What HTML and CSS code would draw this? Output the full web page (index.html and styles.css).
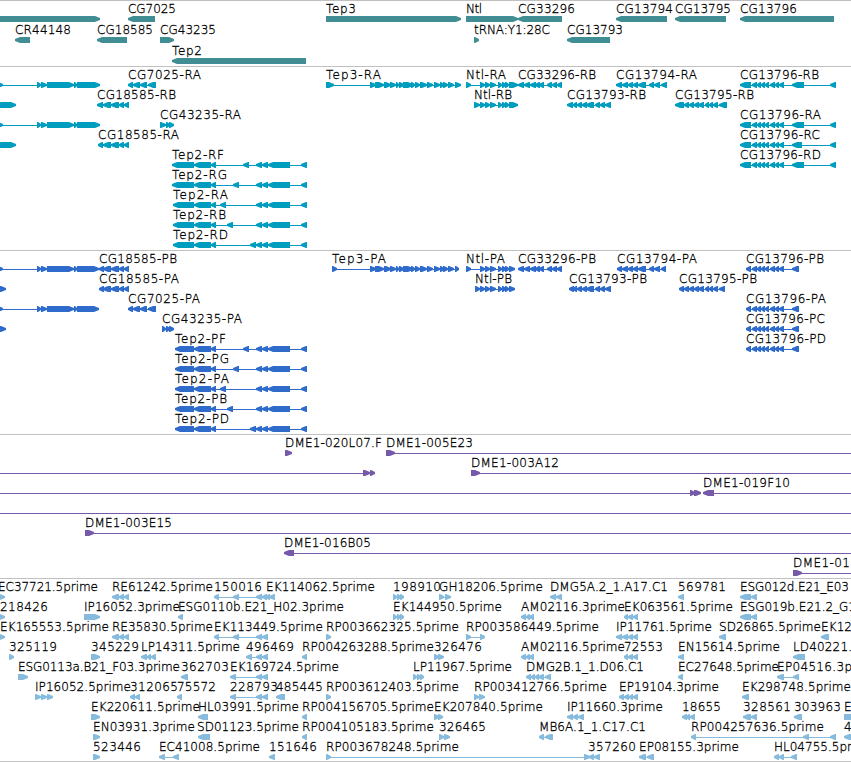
FILE: index.html
```html
<!DOCTYPE html>
<html lang="en">
<head>
  <meta charset="UTF-8">
  <title>Genome region</title>
  <link rel="stylesheet" href="styles.css">
</head>
<body>

  <main class="browser">
    <section class="track genes"><svg id="genes" class="canvas"></svg></section>
    <section class="track transcripts"><svg id="transcripts" class="canvas"></svg></section>
    <section class="track proteins"><svg id="proteins" class="canvas"></svg></section>
    <section class="track bacs"><svg id="bacs" class="canvas"></svg></section>
    <section class="track ests"><svg id="ests" class="canvas"></svg></section>
  </main>

  <script src="tracks.js"></script>
</body>
</html>
```

FILE: styles.css
```css
* {
  box-sizing: border-box;
}

body {
  margin: 0;
  background: #fff;
  overflow: hidden;
}

.browser {
  display: flex;
  flex-direction: column;
  width: 851px;
}

.track {
  border-top: 1px solid #c0c0c0;
  overflow: hidden;
}

.canvas {
  display: block;
  width: 100%;
  height: 100%;
}

.genes {
  height: 66px;
  color: #408e93;
}

.transcripts {
  height: 184px;
  color: #009dbe;
}

.proteins {
  height: 184px;
  color: #2e6bcb;
}

.bacs {
  height: 144px;
  color: #7659a8;
}

.ests {
  height: 184px;
  border-bottom: 1px solid #c0c0c0;
  color: #87bbdd;
}

.label {
  font-family: "DejaVu Sans", sans-serif;
  font-size: 12px;
  font-weight: 200;
  fill: #000;
  stroke: #000;
  stroke-width: 0.3px;
}

.exon,
.intron {
  fill: currentColor;
}
```

FILE: tracks.js
```javascript
const SVG = 'http://www.w3.org/2000/svg';

// exon structures shared by several isoforms
const left = '-5-3 37-41 41-47 47-74 74-77 77-';
const cg18585 = '103-111 111-119 119-124 124-129';
const cg7025 = '128-133 133-140 140-147 148-156';
const tep3 = '370-376 375-384 384-391 390-396 396-399 399-404 403-413 411-415 415-420 420-427 427-433 434-440 440-444 443-448 448-454 ';
const ntl = '480-485 485-490 490-496 498-502 502-506 505-509 ';
const cg33296 = '518-524 524-530 530-536 535-540 539-544 547-552 552-557 557-562';
const cg13793 = '573-577 577-582 582-587 586-594 595-600 600-605 605-611';
const cg13794 = '622-628 628-633 633-638 638-646 649-654 654-660 ';
const cg13795 = '684-689 689-694 694-699 698-704 705-709 709-713 713-718 ';
const cg13796 = '752-757 757-761 761-765 765-769 770-775 775-779 779-784 ';
const tep2Mid = '-194 194-211 211-216 ';
const tep2End = ' 256-262 262-268 268-290 301-307';
const estA = '214-219 233-239 256-262 ';
const estB = '624-628 628-633 633-638';

// [row, label, label start, label end, strand, exons]
const tracks = {
  genes: [
    [0, '', 0, 0, '>', '-5-100'],
    [0, 'CG7025', 128, 176, '<', '128-155'],
    [0, 'Tep3', 326, 356, '>', '326-461'],
    [0, 'Ntl', 466, 482, '>', '466-518'],
    [0, 'CG33296', 518, 575, '<', '518-562'],
    [0, 'CG13794', 616, 673, '<', '616-667'],
    [0, 'CG13795', 675, 731, '<', '675-726'],
    [0, 'CG13796', 740, 797, '<', '740-834'],
    [1, 'CR44148', 15, 71, '<', '15-30'],
    [1, 'CG18585', 97, 153, '<', '97-127'],
    [1, 'CG43235', 160, 216, '>', '160-174'],
    [1, 'tRNA:Y1:28C', 474, 550, '>', '474-479'],
    [1, 'CG13793', 567, 623, '<', '567-610'],
    [2, 'Tep2', 172, 202, '<', '172-306']
  ],
  transcripts: [
    [0, '', 0, 0, '>', left + '100'],
    [0, 'CG7025-RA', 128, 201, '<', cg7025],
    [0, 'Tep3-RA', 326, 381, '>', '326-334 ' + tep3 + '455-461'],
    [0, 'Ntl-RA', 466, 506, '>', '466-471 ' + ntl + '509-518'],
    [0, 'CG33296-RB', 518, 596, '<', cg33296],
    [0, 'CG13794-RA', 616, 697, '<', '616-622 ' + cg13794 + '661-667'],
    [0, 'CG13796-RB', 740, 819, '<', '740-751 ' + cg13796 + '792-804 830-836'],
    [1, '', 0, 0, '>', '-5-16'],
    [1, 'CG18585-RB', 97, 176, '<', '97-103 ' + cg18585],
    [1, 'Ntl-RB', 474, 512, '>', '474-480 ' + ntl + '509-518'],
    [1, 'CG13793-RB', 567, 646, '<', '567-573 ' + cg13793],
    [1, 'CG13795-RB', 675, 754, '<', '675-684 ' + cg13795 + '719-727'],
    [2, '', 0, 0, '>', left + '100'],
    [2, 'CG43235-RA', 160, 241, '>', '160-166 166-170 169-174'],
    [2, 'CG13796-RA', 740, 821, '<', '740-751 ' + cg13796 + '792-804 830-836'],
    [3, '', 0, 0, '>', '-5-16'],
    [3, 'CG18585-RA', 98, 179, '<', '98-103 ' + cg18585],
    [3, 'CG13796-RC', 740, 820, '<', '740-751 ' + cg13796 + '792-802 830-836'],
    [4, 'Tep2-RF', 172, 224, '<', '172' + tep2Mid + '243-249' + tep2End],
    [4, 'CG13796-RD', 740, 821, '<', '740-751 ' + cg13796 + '792-804 830-836'],
    [5, 'Tep2-RG', 172, 227, '<', '172' + tep2Mid + '233-239' + tep2End],
    [6, 'Tep2-RA', 173, 228, '<', '173' + tep2Mid + '220-226' + tep2End],
    [7, 'Tep2-RB', 173, 226, '<', '173' + tep2Mid + '227-233' + tep2End],
    [8, 'Tep2-RD', 173, 228, '<', '173' + tep2Mid + '250-256' + tep2End]
  ],
  proteins: [
    [0, '', 0, 0, '>', left + '99'],
    [0, 'CG18585-PB', 99, 177, '<', '99-104 ' + cg18585],
    [0, 'Tep3-PA', 332, 386, '>', '332-337 ' + tep3 + '455-459'],
    [0, 'Ntl-PA', 466, 505, '>', '466-471 ' + ntl + '509-515'],
    [0, 'CG33296-PB', 518, 596, '<', cg33296],
    [0, 'CG13794-PA', 617, 697, '<', '617-622 ' + cg13794 + '661-666'],
    [0, 'CG13796-PB', 746, 824, '<', '746-751 ' + cg13796 + '792-799'],
    [1, '', 0, 0, '>', '-5-6'],
    [1, 'CG18585-PA', 99, 179, '<', '99-104 ' + cg18585],
    [1, 'Ntl-PB', 475, 512, '>', '475-480 ' + ntl + '509-515'],
    [1, 'CG13793-PB', 569, 647, '<', '569-574 ' + cg13793],
    [1, 'CG13795-PB', 679, 757, '<', '679-684 ' + cg13795 + '719-725'],
    [2, '', 0, 0, '>', left + '99'],
    [2, 'CG7025-PA', 128, 200, '<', cg7025],
    [2, 'CG13796-PA', 746, 826, '<', '746-751 ' + cg13796 + '792-799'],
    [3, '', 0, 0, '>', '-5-6'],
    [3, 'CG43235-PA', 162, 242, '>', '162-166 166-170 169-174'],
    [3, 'CG13796-PC', 746, 825, '<', '746-751 ' + cg13796 + '792-799'],
    [4, 'Tep2-PF', 175, 226, '<', '175' + tep2Mid + '243-249' + tep2End],
    [4, 'CG13796-PD', 746, 826, '<', '746-751 ' + cg13796 + '792-799'],
    [5, 'Tep2-PG', 175, 229, '<', '175' + tep2Mid + '233-239' + tep2End],
    [6, 'Tep2-PA', 175, 229, '<', '175' + tep2Mid + '220-226' + tep2End],
    [7, 'Tep2-PB', 175, 227, '<', '175' + tep2Mid + '227-233' + tep2End],
    [8, 'Tep2-PD', 175, 229, '<', '175' + tep2Mid + '250-256' + tep2End]
  ],
  bacs: [
    [0, 'DME1-020L07.F', 285, 382, '>', '285-292'],
    [0, 'DME1-005E23', 386, 473, '>', '386-395 870-880'],
    [1, '', 0, 0, '>', '-20--10 363-370 370-375'],
    [1, 'DME1-003A12', 471, 559, '>', '471-480 870-880'],
    [2, '', 0, 0, '>', '-20--10 690-695 694-701'],
    [2, 'DME1-019F10', 703, 790, '<', '703-714 870-880'],
    [3, '', 0, 0, '>', '-20--10 870-880'],
    [4, 'DME1-003E15', 85, 172, '>', '85-94 870-880'],
    [5, 'DME1-016B05', 284, 371, '<', '284-294 870-880'],
    [6, 'DME1-01', 793, 850, '>', '793-802 870-880']
  ],
  ests: [
    [0, 'EC37721.5prime', -2, 98, '>', '-5-5'],
    [0, 'RE61242.5prime', 112, 213, '<', '112-119 119-124 124-129'],
    [0, '150016', 214, 262, '<', estA + '262-267'],
    [0, 'EK114062.5prime', 266, 375, '<', '266-270 269-275'],
    [0, '198910', 393, 441, '>', '393-397 397-401 400-404'],
    [0, 'GH18206.5prime', 439, 543, '>', '439-444 445-451'],
    [0, 'DMG5A.2_1.A17.C1', 550, 668, '<', '550-556 556-562'],
    [0, '569781', 678, 726, '<', '678-684'],
    [0, 'ESG012d.E21_E03', 740, 849, '<', '740-751 751-757'],
    [1, '218426', 0, 48, '>', '-5-5'],
    [1, 'IP16052.3prime', 84, 180, '>', '84-100'],
    [1, 'ESG0110b.E21_H02.3prime', 178, 344, '<', '178-183'],
    [1, 'EK144950.5prime', 393, 502, '>', '393-397 397-401 400-404'],
    [1, 'AM02116.3prime', 521, 625, '<', '521-526 526-530 529-534'],
    [1, 'EK063561.5prime', 624, 733, '<', estB],
    [1, 'ESG019b.E21.2_G1', 740, 856, '<', '740-751 751-757'],
    [2, 'EK165553.5prime', 0, 109, '>', '-5-5'],
    [2, 'RE35830.5prime', 112, 213, '<', '112-119 119-124 124-129'],
    [2, 'EK113449.5prime', 214, 323, '<', estA + '262-268'],
    [2, 'RP003662325.5prime', 326, 459, '>', '326-331'],
    [2, 'RP003586449.5prime', 466, 599, '>', '466-471 480-485'],
    [2, 'IP11761.5prime', 616, 712, '<', '616-622 622-628 628-633 633-638'],
    [2, 'SD26865.5prime', 719, 821, '<', '719-726'],
    [2, 'EK12', 821, 852, '<', '821-829'],
    [3, '325119', 9, 57, '>', '9-14'],
    [3, '345229', 91, 139, '>', '91-100'],
    [3, 'LP14311.5prime', 141, 240, '<', '141-147 147-151 151-156'],
    [3, '496469', 246, 294, '<', '246-252 256-262 262-268'],
    [3, 'RP004263288.5prime', 302, 434, '<', '302-307'],
    [3, '326476', 434, 482, '>', '434-439 438-444'],
    [3, 'AM02116.5prime', 521, 625, '<', '521-526 526-530 529-534'],
    [3, '72553', 624, 663, '<', estB],
    [3, 'EN15614.5prime', 678, 780, '<', '678-684'],
    [3, 'LD40221.', 793, 852, '<', '793-805'],
    [4, 'ESG0113a.B21_F03.3prime', 18, 180, '>', '18-28'],
    [4, '362703', 181, 229, '<', '181-188'],
    [4, 'EK169724.5prime', 230, 339, '<', '230-236 256-262 262-268'],
    [4, 'LP11967.5prime', 413, 512, '>', '413-417 417-421 420-424'],
    [4, 'DMG2B.1_1.D06.C1', 526, 644, '<', '526-531 531-535 535-539 538-544 545-551'],
    [4, 'EC27648.5prime', 678, 779, '<', '678-683'],
    [4, 'EP04516.3p', 777, 852, '<', '777-784 793-799'],
    [5, 'IP16052.5prime', 35, 131, '>', '35-41 41-47 47-53'],
    [5, '312065', 130, 178, '<', '130-135 135-140'],
    [5, '75572', 177, 216, '<', '177-182'],
    [5, '228793', 230, 278, '<', '230-236 256-262 262-268'],
    [5, '485445', 276, 323, '<', '276-285'],
    [5, 'RP003612403.5prime', 326, 459, '>', '326-331'],
    [5, 'RP003412766.5prime', 474, 607, '>', '474-479 479-485'],
    [5, 'EP19104.3prime', 619, 719, '<', '619-624 624-629 629-633 633-638'],
    [5, 'EK298748.5prime', 742, 851, '<', '742-749'],
    [6, 'EK220611.5prime', 91, 200, '>', '91-100'],
    [6, 'HL03991.5prime', 198, 299, '<', '198-208'],
    [6, 'RP004156705.5prime', 302, 434, '<', '302-307'],
    [6, 'EK207840.5prime', 434, 543, '>', '434-439 438-443'],
    [6, 'IP11660.3prime', 567, 663, '<', '567-573 573-578 578-584'],
    [6, '18655', 682, 721, '<', '682-687 686-690 690-695'],
    [6, '328561', 743, 791, '<', '743-751 751-757'],
    [6, '303963', 794, 841, '<', '794-802'],
    [6, 'E', 844, 851, '>', '844-856'],
    [7, 'EN03931.3prime', 93, 195, '>', '93-100'],
    [7, 'SD01123.5prime', 197, 299, '<', '198-210'],
    [7, 'RP004105183.5prime', 302, 434, '<', '302-307'],
    [7, '326465', 439, 486, '>', '439-444 444-450'],
    [7, 'MB6A.1_1.C17.C1', 539, 646, '<', '539-544 545-553'],
    [7, 'RP004257636.5prime', 691, 824, '<', '691-696 803-809 830-836'],
    [7, '4', 844, 852, '<', '844-858'],
    [8, '523446', 93, 141, '>', '93-100'],
    [8, 'EC41008.5prime', 159, 260, '<', '159-165 173-179'],
    [8, '151646', 269, 317, '<', '269-275'],
    [8, 'RP003678248.5prime', 326, 459, '>', '326-331 584-590'],
    [8, '357260', 588, 636, '<', '589-594 594-600'],
    [8, 'EP08155.3prime', 639, 739, '<', '639-646 647-654'],
    [8, 'HL04755.5pr', 774, 852, '<', '774-779 779-784 791-797']
  ]
};

function add(parent, name, attrs) {
  const el = document.createElementNS(SVG, name);
  for (const key in attrs) {
    el.setAttribute(key, attrs[key]);
  }
  parent.appendChild(el);
  return el;
}

// box with an arrowhead on the side the strand points to
function exonPoints(start, end, y, strand) {
  const head = Math.min(5, end - start - 1);
  const tip = strand === '>' ? end : start;
  const neck = strand === '>' ? end - head : start + head;
  const back = strand === '>' ? start : end;
  return `${back},${y} ${neck},${y} ${tip},${y + 2} ${tip},${y + 4} ${neck},${y + 6} ${back},${y + 6}`;
}

function drawTrack(id) {
  const svg = document.getElementById(id);
  const step = id === 'genes' ? 21 : 20;

  tracks[id].forEach(([row, label, from, to, strand, exons]) => {
    const top = row * step;
    const parts = exons.split(' ').map(e => e.match(/^(-?\d+)-(-?\d+)$/).slice(1).map(Number));
    const start = parts[0][0];
    const end = parts[parts.length - 1][1];

    if (parts.length > 1) {
      add(svg, 'rect', { class: 'intron', x: start, y: top + 18, width: end - start, height: 1 });
    }
    parts.forEach(([a, b]) => {
      add(svg, 'polygon', { class: 'exon', points: exonPoints(a, b, top + 15, strand) });
    });
    if (label) {
      const text = add(svg, 'text', { class: 'label', x: from, y: top + 12, textLength: to - from });
      text.textContent = label;
    }
  });
}

Object.keys(tracks).forEach(drawTrack);
```
